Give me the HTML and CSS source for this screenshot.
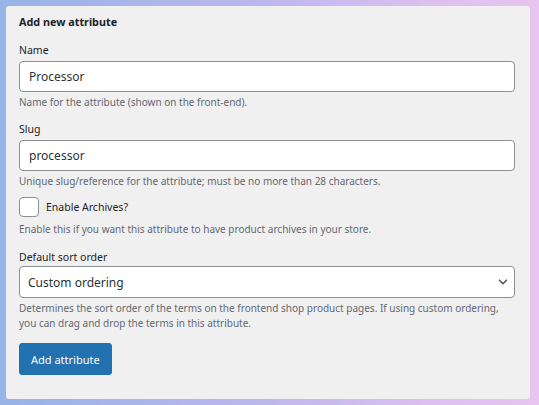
FILE: index.html
```html
<!DOCTYPE html>
<html lang="en">
<head>
<meta charset="utf-8">
<title>Add new attribute</title>
<link rel="stylesheet" href="styles.css">
</head>
<body>
<div class="frame">
  <div class="panel">
    <h2 class="title">Add new attribute</h2>

    <div class="field field-name">
      <label class="label" for="attr-name">Name</label>
      <div class="input">Processor</div>
      <p class="hint">Name for the attribute (shown on the front-end).</p>
    </div>

    <div class="field field-slug">
      <label class="label" for="attr-slug">Slug</label>
      <div class="input">processor</div>
      <p class="hint">Unique slug/reference for the attribute; must be no more than 28 characters.</p>
    </div>

    <div class="field field-archive">
      <div class="check-row">
        <span class="checkbox"></span>
        <span class="check-label">Enable Archives?</span>
      </div>
      <p class="hint hint-archive">Enable this if you want this attribute to have product archives in your store.</p>
    </div>

    <div class="field field-sort">
      <label class="label label-sort">Default sort order</label>
      <div class="select">
        <span>Custom ordering</span>
        <svg class="chevron" width="10" height="6" viewBox="0 0 10 6"><path d="M1.5 1.2l3.5 3.5 3.5-3.5" fill="none" stroke="#50575e" stroke-width="1.6" stroke-linecap="round" stroke-linejoin="round"/></svg>
      </div>
      <p class="hint hint-sort">Determines the sort order of the terms on the frontend shop product pages. If using custom ordering, you can drag and drop the terms in this attribute.</p>
    </div>

    <button class="button">Add attribute</button>
  </div>
</div>
</body>
</html>
```

FILE: styles.css
```css
html, body {
  margin: 0;
  padding: 0;
}
body {
  width: 539px;
  height: 405px;
  overflow: hidden;
  font-family: "Noto Sans", "Open Sans", sans-serif;
  color: #1d2327;
}
.frame {
  box-sizing: border-box;
  width: 539px;
  height: 405px;
  padding: 6px 9px 6px 6px;
  background: linear-gradient(90deg, #97b3e8 0%, #b9b6ee 45%, #dcc0f0 80%, #e8c5f0 100%);
}
.panel {
  box-sizing: border-box;
  height: 393px;
  background: #f0f0f0;
  border-radius: 3px;
  padding: 8px 15px 0 13px;
}
.title {
  margin: 0 0 13px;
  font-size: 10.8px;
  line-height: 16px;
  font-weight: 700;
}
.label {
  display: block;
  font-size: 10.5px;
  line-height: 14px;
  margin-bottom: 4px;
}
.input, .select {
  box-sizing: border-box;
  height: 31px;
  background: #fff;
  border: 1px solid #8c8f94;
  border-radius: 4px;
  padding: 0 9px;
  font-size: 12px;
  color: #2c3338;
  display: flex;
  align-items: center;
}
.hint {
  margin: 3px 0 0;
  font-size: 10px;
  line-height: 14px;
  color: #646970;
}
.field-slug {
  margin-top: 13px;
}
.field-archive {
  margin-top: 9px;
}
.check-row {
  display: flex;
  align-items: center;
  height: 20px;
}
.checkbox {
  box-sizing: border-box;
  width: 20px;
  height: 20px;
  background: #fff;
  border: 1px solid #8c8f94;
  border-radius: 4px;
  margin-right: 7px;
}
.check-label {
  font-size: 10.5px;
  line-height: 14px;
}
.hint-archive {
  margin-top: 5px;
}
.field-sort {
  margin-top: 14px;
}
.label-sort {
  margin-bottom: 2px;
}
.select {
  height: 32px;
  justify-content: space-between;
  padding: 0 6px 0 8px;
}
.chevron {
  display: block;
}
.hint-sort {
  line-height: 15px;
  margin-top: 3px;
}
.button {
  margin-top: 12px;
  height: 32px;
  padding: 0 11px;
  background: #2271b1;
  border: 1px solid #2271b1;
  border-radius: 3px;
  color: #fff;
  font-family: "Noto Sans", "Open Sans", sans-serif;
  font-size: 11px;
  cursor: pointer;
}
```
